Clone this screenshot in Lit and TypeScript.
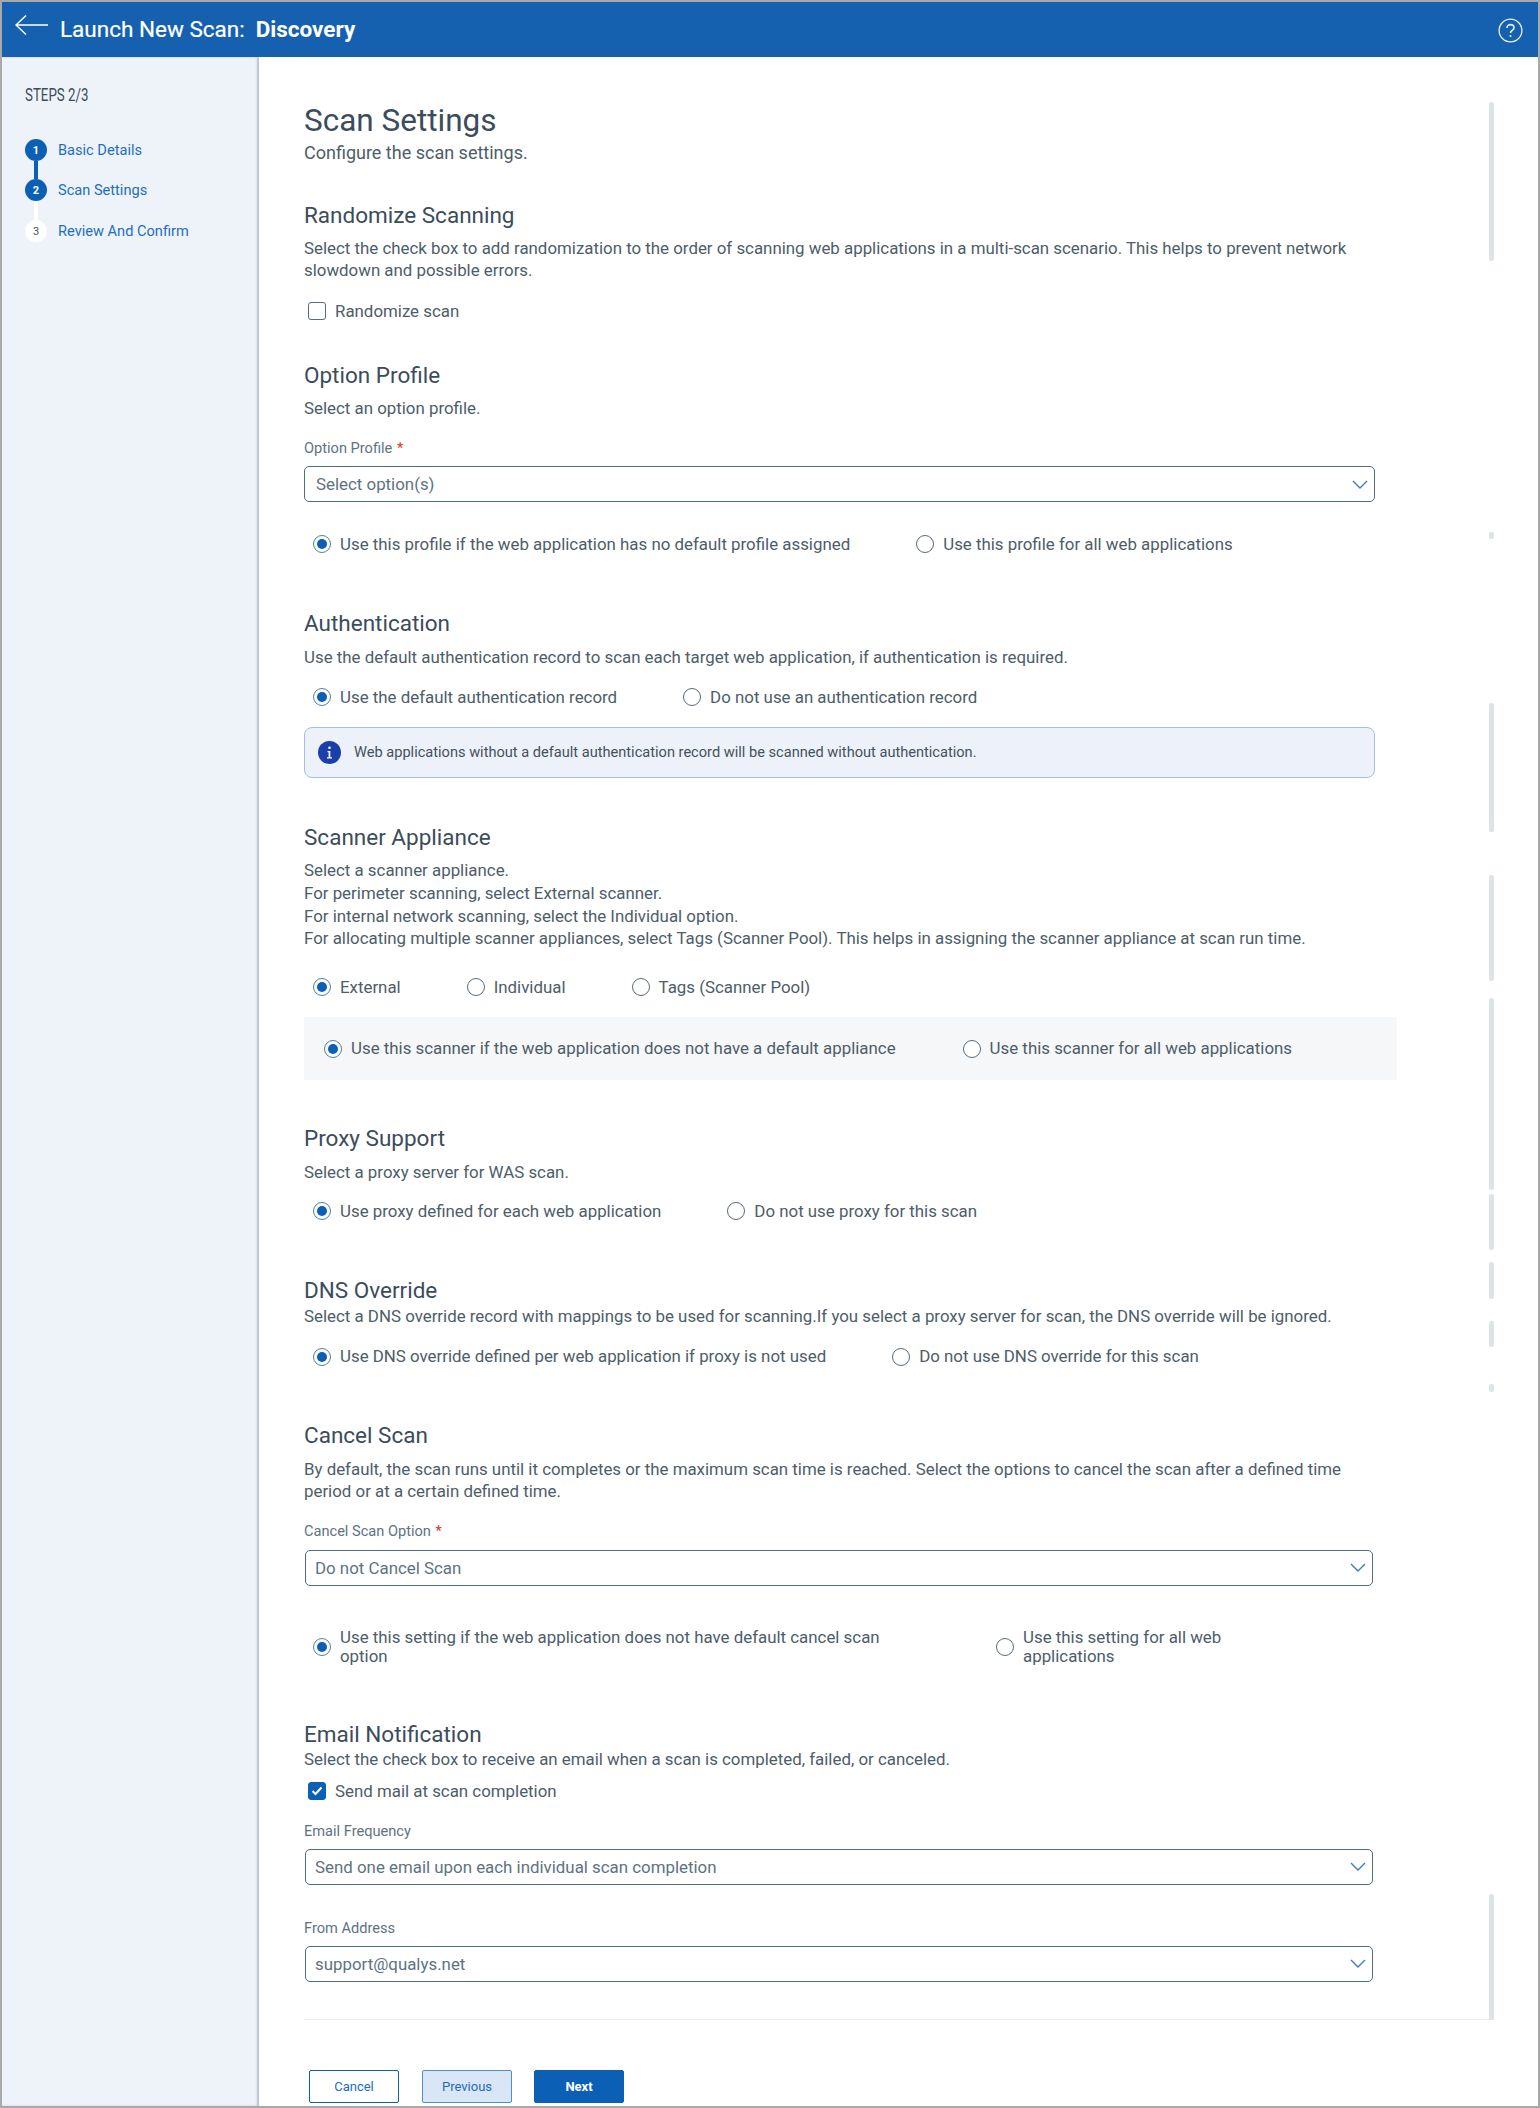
import { LitElement, html, css } from "lit";
import { customElement } from "lit/decorators.js";

const chevron = html`<svg class="chev" width="16" height="9" viewBox="0 0 16 9"><path d="M1 1l7 7 7-7" fill="none" stroke="#3a7cc8" stroke-width="1.4"/></svg>`;

const SCROLL: [number, number][] = [
  [102, 261], [532, 539], [703, 832], [875, 981], [998, 1190], [1194, 1250],
  [1262, 1299], [1321, 1347], [1384, 1392], [1894, 2020],
];

@customElement("app-root")
export class AppRoot extends LitElement {
  static styles = css`
    :host { display: block; width: 1540px; height: 2108px; overflow: hidden; font-family: Roboto, "Liberation Sans", sans-serif; color: #4d5d6a; position: relative; background: #fff; }
    * { box-sizing: border-box; }
    .frame { width: 1540px; height: 2108px; border: 2px solid #a9a9a9; display: flex; flex-direction: column; overflow: hidden; position: relative; }
    .top { height: 55px; background: #1561b0; color: #fff; display: flex; align-items: center; flex: none; }
    .back { margin-left: 13px; margin-top: -9px; flex: none; display: block; }
    .t1 { font-size: 22.5px; font-weight: 400; margin-left: 11px; margin-bottom: 2px; -webkit-text-stroke: 0.2px #fff; }
    .t2 { font-size: 22.5px; font-weight: 700; margin-left: 11px; margin-bottom: 2px; }
    .help { margin-left: auto; margin-right: 15px; margin-top: 1px; display: block; }
    .body { flex: 1; display: flex; min-height: 0; }
    .side { width: 257px; flex: none; background: #eef3fa; box-shadow: inset -2px 0 2px rgba(90,100,115,.35); padding: 26px 0 0 23px; }
    .stepstitle { height: 56px; }
    .stepstitle span { display: inline-block; font-size: 18.5px; line-height: 24px; color: #3f4d5a; transform: scaleX(0.72); transform-origin: left center; white-space: nowrap; }
    .step { display: flex; }
    .rail { width: 22px; display: flex; flex-direction: column; align-items: center; flex: none; }
    .dot { width: 22px; height: 22px; border-radius: 50%; display: flex; align-items: center; justify-content: center; font-size: 11px; font-weight: 700; background: #0b5fb4; color: #fff; }
    .dot.off { background: #fff; color: #44515e; font-weight: 400; }
    .line { width: 4px; height: 18px; background: #0b5fb4; }
    .line.white { background: #fff; height: 19px; }
    .steplabel { margin-left: 11px; font-size: 14.6px; line-height: 22px; color: #1f6ec0; }
    .main { flex: 1; padding: 46px 0 0 45px; position: relative; font-size: 16.87px; }
    h1 { margin: 0; font-size: 31.5px; line-height: 36px; font-weight: 400; color: #3b4c5c; }
    h2 { margin: 0; font-size: 22.5px; line-height: 28px; font-weight: 400; color: #3b4c5c; }
    p { margin: 0; line-height: 22px; width: 1060px; }
    .lead { font-size: 18px; }
    .lines { line-height: 22.8px; width: 1100px; }
    .check { display: flex; align-items: center; height: 24px; padding-left: 4px; }
    .cb { width: 18px; height: 18px; border: 1.5px solid #566b7a; border-radius: 3px; flex: none; margin-right: 9px; }
    .cb.on { background: #0b5fb4; border-color: #0b5fb4; display: flex; align-items: center; justify-content: center; }
    .flabel { font-size: 14.6px; line-height: 18px; color: #5d7383; }
    .star { color: #e8301f; margin-left: 1px; }
    .select { height: 36px; width: 1071px; border: 1.5px solid #4f6b7c; border-radius: 5px; display: flex; align-items: center; justify-content: space-between; padding: 0 6px 0 11px; color: #5d7383; }
    .nudge { margin-left: 1px; width: 1068px; padding-left: 9px; }
    .radios { display: flex; align-items: center; min-height: 24px; padding-left: 9px; gap: 66px; }
    .radio { display: flex; align-items: center; gap: 9px; }
    .rb { width: 18px; height: 18px; border-radius: 50%; border: 1.2px solid #566b7a; background: #fff; flex: none; display: flex; align-items: center; justify-content: center; }
    .rb.on { border-color: #4f7fa8; }
    .rb.on::after { content: ""; width: 10px; height: 10px; border-radius: 50%; background: #0b5fb4; }
    .radio span { line-height: 19px; }
    .w1 { margin-right: 20px; }
    .w1 span { width: 570px; }
    .w2 span { width: 265px; }
    .info { height: 51px; width: 1071px; background: #edf2fa; border: 1px solid #a3c0e2; border-radius: 8px; display: flex; align-items: center; padding-left: 13px; font-size: 14.6px; gap: 13px; color: #44515e; }
    .info span { margin-bottom: 1px; }
    .box { height: 63px; width: 1093px; background: #f6f7f9; padding-left: 20px; display: flex; align-items: center; gap: 67px; }
    .divider { height: 1px; width: 1190px; background: #e8ecee; }
    .buttons { display: flex; gap: 23px; padding-left: 5px; }
    .btn { width: 90px; height: 33px; border-radius: 2px; border: 1px solid #0b5fb4; display: flex; align-items: center; justify-content: center; font-size: 13px; color: #1e6cbc; background: #fff; }
    .btn.prev { background: #d9e6f5; border-color: #4d8fcf; }
    .btn.next { background: #0b5fb4; color: #fff; font-weight: 700; margin-left: -1px; }
    .thumb { position: absolute; left: 1230px; width: 5px; background: #dde4e8; border-radius: 2px; }
    .m3 { margin-top: 3px; } .m8 { margin-top: 8px; } .m9 { margin-top: 9px; } .m10 { margin-top: 10px; } .m1 { margin-top: 1px; }
    .m16 { margin-top: 16px; } .m17 { margin-top: 17px; } .m18 { margin-top: 18px; } .m19 { margin-top: 19px; } .m20 { margin-top: 20px; }
    .m25 { margin-top: 25px; } .m30 { margin-top: 30px; } .m34 { margin-top: 34px; } .m37 { margin-top: 37px; } .m38 { margin-top: 38px; }
    .m42 { margin-top: 42px; } .m44 { margin-top: 44px; } .m45 { margin-top: 45px; } .m50 { margin-top: 50px; } .m52 { margin-top: 52px; } .m53 { margin-top: 53px; } .m54 { margin-top: 54px; }
  `;

  private radio(label: string, on = false, cls = "") {
    return html`<label class="radio ${cls}"><i class="rb ${on ? "on" : ""}"></i><span>${label}</span></label>`;
  }

  private step(n: number, label: string, off: boolean, line: string) {
    return html`<div class="step">
      <div class="rail"><div class="dot ${off ? "off" : ""}">${n}</div>${line ? html`<div class="line ${line}"></div>` : ""}</div>
      <div class="steplabel">${label}</div>
    </div>`;
  }

  render() {
    return html`<div class="frame">
      <header class="top">
        <svg class="back" width="34" height="22" viewBox="0 0 34 22"><path d="M33 11H1M11 1.5L1 11l10 9.5" fill="none" stroke="#fff" stroke-width="1.4"/></svg>
        <div class="t1">Launch New Scan:</div><div class="t2">Discovery</div>
        <svg class="help" width="25" height="25" viewBox="0 0 25 25"><circle cx="12.5" cy="12.5" r="11.4" fill="none" stroke="#e8eef6" stroke-width="1.3"/><path d="M9 10c0-2.200 1.600-3.400 3.500-3.400S16 7.800 16 9.700c0 2.600-3.500 2.700-3.500 5.300" fill="none" stroke="#e8eef6" stroke-width="1.6"/><circle cx="12.500" cy="18" r="1.100" fill="#e8eef6"/></svg>
      </header>
      <div class="body">
        <nav class="side">
          <div class="stepstitle"><span>STEPS 2/3</span></div>
          ${this.step(1, "Basic Details", false, "blue")}
          ${this.step(2, "Scan Settings", false, "white")}
          ${this.step(3, "Review And Confirm", true, "")}
        </nav>
        <main class="main">
          ${SCROLL.map(([a, b]) => html`<div class="thumb" style="top:${a - 57}px;height:${b - a}px"></div>`)}
          <h1>Scan Settings</h1>
          <p class="m3 lead">Configure the scan settings.</p>

          <h2 class="m37">Randomize Scanning</h2>
          <p class="m8">Select the check box to add randomization to the order of scanning web applications in a multi-scan scenario. This helps to prevent network slowdown and possible errors.</p>
          <div class="check m18"><i class="cb"></i><span>Randomize scan</span></div>

          <h2 class="m38">Option Profile</h2>
          <p class="m8">Select an option profile.</p>
          <div class="flabel m20">Option Profile <span class="star">*</span></div>
          <div class="select m9"><span>Select option(s)</span>${chevron}</div>
          <div class="radios m30">${this.radio("Use this profile if the web application has no default profile assigned", true)}${this.radio("Use this profile for all web applications")}</div>

          <h2 class="m53">Authentication</h2>
          <p class="m9">Use the default authentication record to scan each target web application, if authentication is required.</p>
          <div class="radios m17">${this.radio("Use the default authentication record", true)}${this.radio("Do not use an authentication record")}</div>
          <div class="info m18">
            <svg width="23" height="23" viewBox="0 0 23 23"><circle cx="11.500" cy="11.500" r="11.500" fill="#1a3fa8"/><circle cx="11.500" cy="6.800" r="1.300" fill="#fff"/><path d="M9.500 10h2.800v6.200h1.700v1.300H9v-1.300h1.600v-4.900H9.500z" fill="#fff"/></svg>
            <span>Web applications without a default authentication record will be scanned without authentication.</span>
          </div>

          <h2 class="m45">Scanner Appliance</h2>
          <p class="m8 lines">Select a scanner appliance.<br>For perimeter scanning, select External scanner.<br>For internal network scanning, select the Individual option.<br>For allocating multiple scanner appliances, select Tags (Scanner Pool). This helps in assigning the scanner appliance at scan run time.</p>
          <div class="radios m25">${this.radio("External", true)}${this.radio("Individual")}${this.radio("Tags (Scanner Pool)")}</div>
          <div class="box m18">${this.radio("Use this scanner if the web application does not have a default appliance", true)}${this.radio("Use this scanner for all web applications")}</div>

          <h2 class="m44">Proxy Support</h2>
          <p class="m9">Select a proxy server for WAS scan.</p>
          <div class="radios m16">${this.radio("Use proxy defined for each web application", true)}${this.radio("Do not use proxy for this scan")}</div>

          <h2 class="m53">DNS Override</h2>
          <p class="m1 lines">Select a DNS override record with mappings to be used for scanning.If you select a proxy server for scan, the DNS override will be ignored.</p>
          <div class="radios m17">${this.radio("Use DNS override defined per web application if proxy is not used", true)}${this.radio("Do not use DNS override for this scan")}</div>

          <h2 class="m52">Cancel Scan</h2>
          <p class="m9">By default, the scan runs until it completes or the maximum scan time is reached. Select the options to cancel the scan after a defined time period or at a certain defined time.</p>
          <div class="flabel m20">Cancel Scan Option <span class="star">*</span></div>
          <div class="select m10 nudge"><span>Do not Cancel Scan</span>${chevron}</div>
          <div class="radios m42">${this.radio("Use this setting if the web application does not have default cancel scan option", true, "w1")}${this.radio("Use this setting for all web applications", false, "w2")}</div>

          <h2 class="m54">Email Notification</h2>
          <p>Select the check box to receive an email when a scan is completed, failed, or canceled.</p>
          <div class="check m9"><i class="cb on"><svg width="12" height="10" viewBox="0 0 12 10"><path d="M1.500 5l3 3 6-6.500" fill="none" stroke="#fff" stroke-width="2"/></svg></i><span>Send mail at scan completion</span></div>
          <div class="flabel m19">Email Frequency</div>
          <div class="select m9 nudge"><span>Send one email upon each individual scan completion</span>${chevron}</div>
          <div class="flabel m34">From Address</div>
          <div class="select m9 nudge"><span>support@qualys.net</span>${chevron}</div>
          <div class="divider m37"></div>
          <div class="buttons m50"><div class="btn">Cancel</div><div class="btn prev">Previous</div><div class="btn next">Next</div></div>
        </main>
      </div>
    </div>`;
  }
}
